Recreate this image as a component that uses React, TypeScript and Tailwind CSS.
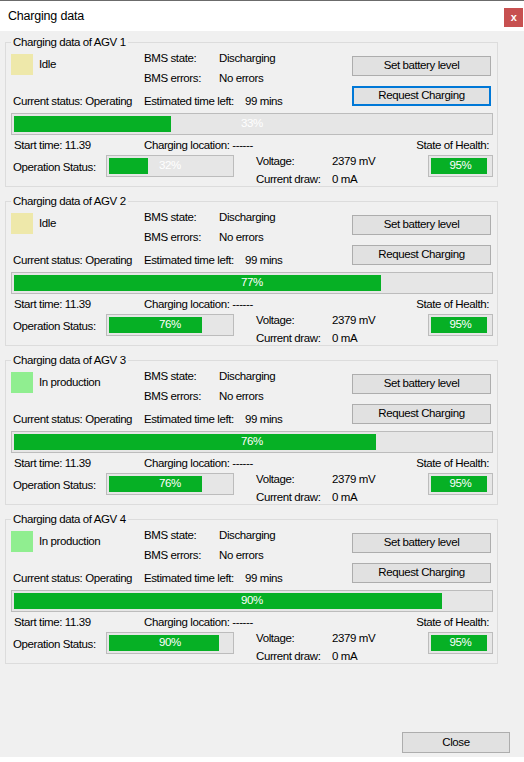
const agvs = [
  { id: 1, state: 'Idle', swatch: 'bg-[#eee8aa]', charge: 33, op: 32, focused: true },
  { id: 2, state: 'Idle', swatch: 'bg-[#eee8aa]', charge: 77, op: 76, focused: false },
  { id: 3, state: 'In production', swatch: 'bg-[#90ee90]', charge: 76, op: 76, focused: false },
  { id: 4, state: 'In production', swatch: 'bg-[#90ee90]', charge: 90, op: 90, focused: false },
];

function Bar({ pct, className }: { pct: number; className: string }) {
  return (
    <div className={`relative border border-[#bcbcbc] bg-[#e6e6e6] p-[2px] ${className}`}>
      <div className="h-full bg-[#06b025]" style={{ width: `${pct}%` }} />
      <span className="absolute inset-0 flex items-center justify-center text-white leading-none">
        {pct}%
      </span>
    </div>
  );
}

function WinButton({ label, focused }: { label: string; focused?: boolean }) {
  return (
    <button
      className={`w-[139px] h-[20px] bg-[#e1e1e1] leading-none ${
        focused ? 'border-2 border-[#0078d7]' : 'border border-[#adadad]'
      }`}
    >
      {label}
    </button>
  );
}

function AgvGroup({ agv }: { agv: (typeof agvs)[number] }) {
  return (
    <div className="relative ml-[5px] w-[493px] h-[145px] border border-[#dcdcdc]">
      <span className="absolute -top-[8px] left-[5px] px-[2px] bg-[#f0f0f0] leading-[15px] whitespace-nowrap">
        Charging data of AGV {agv.id}
      </span>

      <div className="flex h-[70px]">
        <div className="w-[138px]">
          <div className="mt-[11px] ml-[5px] flex items-center h-[21px]">
            <div className={`w-[22px] h-[21px] ${agv.swatch}`} />
            <span className="ml-[6px] whitespace-nowrap">{agv.state}</span>
          </div>
          <div className="mt-[19px] ml-[7px] leading-[15px] whitespace-nowrap">Current status: Operating</div>
        </div>

        <div className="w-[208px] leading-[15px] whitespace-nowrap">
          <div className="mt-[8px] flex">
            <span className="w-[75px]">BMS state:</span>
            <span>Discharging</span>
          </div>
          <div className="mt-[5px] flex">
            <span className="w-[75px]">BMS errors:</span>
            <span>No errors</span>
          </div>
          <div className="mt-[8px] flex">
            <span className="w-[101px]">Estimated time left:</span>
            <span>99 mins</span>
          </div>
        </div>

        <div className="mt-[13px] flex flex-col gap-[10px]">
          <WinButton label="Set battery level" />
          <WinButton label="Request Charging" focused={agv.focused} />
        </div>
      </div>

      <Bar pct={agv.charge} className="ml-[5px] w-[482px] h-[22px]" />

      <div className="mt-[3px] flex h-[15px] leading-[15px] whitespace-nowrap">
        <span className="ml-[8px] w-[130px]">Start time: 11.39</span>
        <span>Charging location: ------</span>
        <span className="flex-1 text-right pr-[8px]">State of Health:</span>
      </div>

      <div className="flex items-start whitespace-nowrap">
        <span className="ml-[7px] w-[93px] mt-[7px] leading-[15px]">Operation Status:</span>
        <Bar pct={agv.op} className="mt-[2px] w-[128px] h-[22px]" />
        <div className="ml-[22px] leading-[15px]">
          <div className="mt-[1px] flex">
            <span className="w-[76px]">Voltage:</span>
            <span>2379 mV</span>
          </div>
          <div className="mt-[3px] flex">
            <span className="w-[76px]">Current draw:</span>
            <span>0 mA</span>
          </div>
        </div>
        <Bar pct={95} className="ml-auto mr-[4px] mt-[2px] w-[65px] h-[22px]" />
      </div>
    </div>
  );
}

export default function App() {
  return (
    <div className="w-[524px] h-[762px] bg-white text-black text-[11.5px] tracking-[-0.4px] font-['Liberation_Sans',Arial,sans-serif]">
      <div className="h-px bg-[#6b6b6b]" />
      <div className="h-[30px] flex items-start justify-between">
        <span className="ml-[8px] mt-[8px] text-[12.5px] tracking-[-0.2px] leading-[15px]">Charging data</span>
        <div className="mt-[7px] mr-[1px] w-[19px] h-[19px] bg-[#c75050] text-white text-[11px] font-bold flex items-center justify-center leading-none">
          x
        </div>
      </div>

      <div className="h-[726px] bg-[#f0f0f0] flex flex-col">
        <div className="mt-[11px] flex flex-col gap-[14px]">
          {agvs.map(agv => (
            <AgvGroup key={agv.id} agv={agv} />
          ))}
        </div>
        <button className="mt-auto mb-[4px] self-end mr-[14px] w-[108px] h-[21px] bg-[#e1e1e1] border border-[#adadad] leading-none">
          Close
        </button>
      </div>
    </div>
  );
}
